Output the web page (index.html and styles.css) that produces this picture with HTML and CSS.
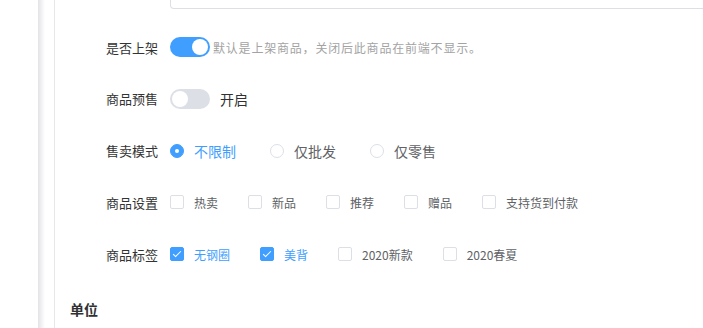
FILE: index.html
```html
<!DOCTYPE html>
<html lang="zh-CN">
<head>
<meta charset="utf-8">
<title>商品设置</title>
<link rel="stylesheet" href="styles.css">
</head>
<body>
<div class="page">
  <div class="rail"></div>
  <div class="rail-shadow"></div>
  <div class="gutter"></div>
  <main class="card">
    <div class="form">
      <div class="prev-row">
        <div class="label"></div>
        <div class="textarea-tail"></div>
      </div>

      <div class="row">
        <div class="label">是否上架</div>
        <div class="field">
          <span class="switch on"><span class="knob"></span></span>
          <span class="hint">默认是上架商品，关闭后此商品在前端不显示。</span>
        </div>
      </div>

      <div class="row">
        <div class="label">商品预售</div>
        <div class="field">
          <span class="switch"><span class="knob"></span></span>
          <span class="switch-text">开启</span>
        </div>
      </div>

      <div class="row">
        <div class="label">售卖模式</div>
        <div class="field">
          <label class="radio checked"><span class="radio-dot"></span><span class="radio-text">不限制</span></label>
          <label class="radio"><span class="radio-dot"></span><span class="radio-text">仅批发</span></label>
          <label class="radio"><span class="radio-dot"></span><span class="radio-text">仅零售</span></label>
        </div>
      </div>

      <div class="row">
        <div class="label">商品设置</div>
        <div class="field">
          <label class="check"><span class="box"></span><span class="check-text">热卖</span></label>
          <label class="check"><span class="box"></span><span class="check-text">新品</span></label>
          <label class="check"><span class="box"></span><span class="check-text">推荐</span></label>
          <label class="check"><span class="box"></span><span class="check-text">赠品</span></label>
          <label class="check"><span class="box"></span><span class="check-text">支持货到付款</span></label>
        </div>
      </div>

      <div class="row">
        <div class="label">商品标签</div>
        <div class="field">
          <label class="check checked"><span class="box"></span><span class="check-text">无钢圈</span></label>
          <label class="check checked"><span class="box"></span><span class="check-text">美背</span></label>
          <label class="check"><span class="box"></span><span class="check-text">2020新款</span></label>
          <label class="check"><span class="box"></span><span class="check-text">2020春夏</span></label>
        </div>
      </div>

      <h3 class="section-title">单位</h3>
    </div>
  </main>
</div>
</body>
</html>
```

FILE: styles.css
```css
html, body {
  margin: 0;
  padding: 0;
  background: #fff;
  overflow: hidden;
  height: 328px;
}
body {
  font-family: "Noto Sans CJK SC", "Noto Sans", sans-serif;
  color: #303133;
}
.page {
  display: flex;
  height: 328px;
}
.rail {
  width: 38px;
  flex: none;
  background: #fff;
}
.rail-shadow {
  width: 7px;
  flex: none;
  background: linear-gradient(to right, #e3e3e6, #f4f4f6 60%, #fff);
}
.gutter {
  width: 9px;
  flex: none;
  background: #fff;
}
.card {
  flex: 1;
  border-left: 1px solid #e6e7ea;
  padding-left: 15px;
  min-width: 0;
}
.form {
  display: flex;
  flex-direction: column;
}
.prev-row {
  display: flex;
  height: 9px;
  margin-bottom: 22px;
}
.label {
  width: 100px;
  flex: none;
  box-sizing: border-box;
  padding-right: 12px;
  text-align: right;
  font-size: 13px;
  color: #333;
}
.textarea-tail {
  flex: none;
  width: 700px;
  height: 9px;
  box-sizing: border-box;
  border: 1px solid #dcdfe6;
  border-top: none;
  border-radius: 0 0 4px 4px;
}
.row {
  display: flex;
  align-items: center;
  height: 32px;
  margin-bottom: 19.75px;
}
.field {
  display: flex;
  align-items: center;
}
.switch {
  position: relative;
  width: 40px;
  height: 20px;
  border-radius: 10px;
  background: #dcdfe6;
  flex: none;
}
.switch.on {
  background: #409eff;
}
.switch .knob {
  position: absolute;
  top: 2px;
  left: 2px;
  width: 16px;
  height: 16px;
  border-radius: 50%;
  background: #fff;
}
.switch.on .knob {
  left: 22px;
}
.hint {
  margin-left: 3px;
  font-size: 12px;
  letter-spacing: 0.8px;
  color: #a3a3a3;
}
.switch-text {
  margin-left: 10px;
  font-size: 14px;
  color: #303133;
}
.radio {
  display: flex;
  align-items: center;
  margin-right: 34px;
}
.radio-dot {
  position: relative;
  width: 14px;
  height: 14px;
  box-sizing: border-box;
  border: 1px solid #dcdfe6;
  border-radius: 50%;
  background: #fff;
}
.radio.checked .radio-dot {
  border-color: #409eff;
  background: #409eff;
}
.radio.checked .radio-dot::after {
  content: "";
  position: absolute;
  left: 50%;
  top: 50%;
  width: 4px;
  height: 4px;
  margin: -2px 0 0 -2px;
  border-radius: 50%;
  background: #fff;
}
.radio-text {
  padding-left: 10px;
  font-size: 14px;
  color: #606266;
}
.radio.checked .radio-text {
  color: #409eff;
}
.check {
  display: flex;
  align-items: center;
  margin-right: 30px;
}
.box {
  position: relative;
  width: 14px;
  height: 14px;
  box-sizing: border-box;
  border: 1px solid #dcdfe6;
  border-radius: 2px;
  background: #fff;
}
.check.checked .box {
  background: #409eff;
  border-color: #409eff;
}
.check.checked .box::after {
  content: "";
  position: absolute;
  left: 4px;
  top: 1px;
  width: 3px;
  height: 7px;
  border: 1px solid #fff;
  border-left: 0;
  border-top: 0;
  transform: rotate(45deg);
}
.check-text {
  padding-left: 10px;
  font-size: 12px;
  color: #606266;
}
.check.checked .check-text {
  color: #409eff;
}
.section-title {
  margin: 9px 0 0;
  font-size: 14px;
  font-weight: bold;
  color: #303133;
  line-height: 20px;
}
```
